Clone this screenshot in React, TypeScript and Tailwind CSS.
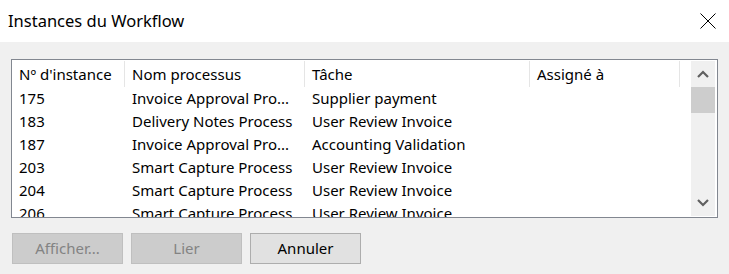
const rows = [
  { id: "175", name: "Invoice Approval Pro...", task: "Supplier payment" },
  { id: "183", name: "Delivery Notes Process", task: "User Review Invoice" },
  { id: "187", name: "Invoice Approval Pro...", task: "Accounting Validation" },
  { id: "203", name: "Smart Capture Process", task: "User Review Invoice" },
  { id: "204", name: "Smart Capture Process", task: "User Review Invoice" },
  { id: "206", name: "Smart Capture Process", task: "User Review Invoice" },
];

const cols = [
  { label: "Nº d'instance", w: "w-[113px]" },
  { label: "Nom processus", w: "w-[180px]" },
  { label: "Tâche", w: "w-[225px]" },
  { label: "Assigné à", w: "w-[150px]" },
];

function Chevron({ up }: { up?: boolean }) {
  return (
    <svg width="12" height="8" viewBox="0 0 12 8">
      <path
        d={up ? "M1 7L6 2L11 7" : "M1 1L6 6L11 1"}
        stroke="#606060"
        strokeWidth="2.2"
        fill="none"
      />
    </svg>
  );
}

export default function App() {
  return (
    <div className="w-[729px] h-[274px] bg-[#f0f0f0] font-['Segoe_UI','Noto_Sans',sans-serif] text-black relative overflow-hidden">
      {/* title bar */}
      <div className="h-[42px] bg-white flex items-center justify-between pl-[8px] pr-[13px]">
        <span className="text-[16.5px] leading-none">Instances du Workflow</span>
        <svg width="16" height="16" viewBox="0 0 16 16" className="text-black">
          <path d="M0.5 0.5L15.5 15.5M15.5 0.5L0.5 15.5" stroke="currentColor" strokeWidth="1" fill="none" />
        </svg>
      </div>

      <div className="pt-[17px] pl-[11px] pr-[11px]">
        <div className="relative h-[159px] border border-[#828790] bg-white flex overflow-hidden">
          <div className="flex-1 flex flex-col text-[15px]">
            <div className="flex h-[27px] pt-[1px] shrink-0">
              {cols.map((c) => (
                <div
                  key={c.label}
                  className={`${c.w} h-[26px] flex items-center pl-[7px] border-r border-[#e5e5e5] whitespace-nowrap`}
                >
                  {c.label}
                </div>
              ))}
            </div>
            {rows.map((r) => (
              <div key={r.id} className="flex h-[23px] shrink-0 items-center whitespace-nowrap">
                <div className="w-[113px] pl-[7px]">{r.id}</div>
                <div className="w-[180px] pl-[7px]">{r.name}</div>
                <div className="w-[225px] pl-[7px]">{r.task}</div>
              </div>
            ))}
          </div>

          {/* scrollbar */}
          <div className="py-[1px] pr-[2px] flex">
            <div className="w-[24px] bg-[#f0f0f0] flex flex-col">
              <div className="h-[26px] flex items-center justify-center">
                <Chevron up />
              </div>
              <div className="h-[26px] bg-[#cdcdcd]" />
              <div className="flex-1" />
              <div className="h-[26px] flex items-center justify-center">
                <Chevron />
              </div>
            </div>
          </div>

          <div className="absolute left-[520px] -bottom-[1px] w-[148px] h-[1px] bg-white" />
        </div>
      </div>

      {/* buttons */}
      <div className="flex gap-[8px] pl-[12px] pt-[15px] text-[15px]">
        <button className="w-[111px] h-[31px] bg-[#cccccc] border border-[#bfbfbf] text-[#838383]">
          Afficher...
        </button>
        <button className="w-[111px] h-[31px] bg-[#cccccc] border border-[#bfbfbf] text-[#838383]">
          Lier
        </button>
        <button className="w-[111px] h-[31px] bg-[#e1e1e1] border border-[#adadad]">
          Annuler
        </button>
      </div>
    </div>
  );
}
